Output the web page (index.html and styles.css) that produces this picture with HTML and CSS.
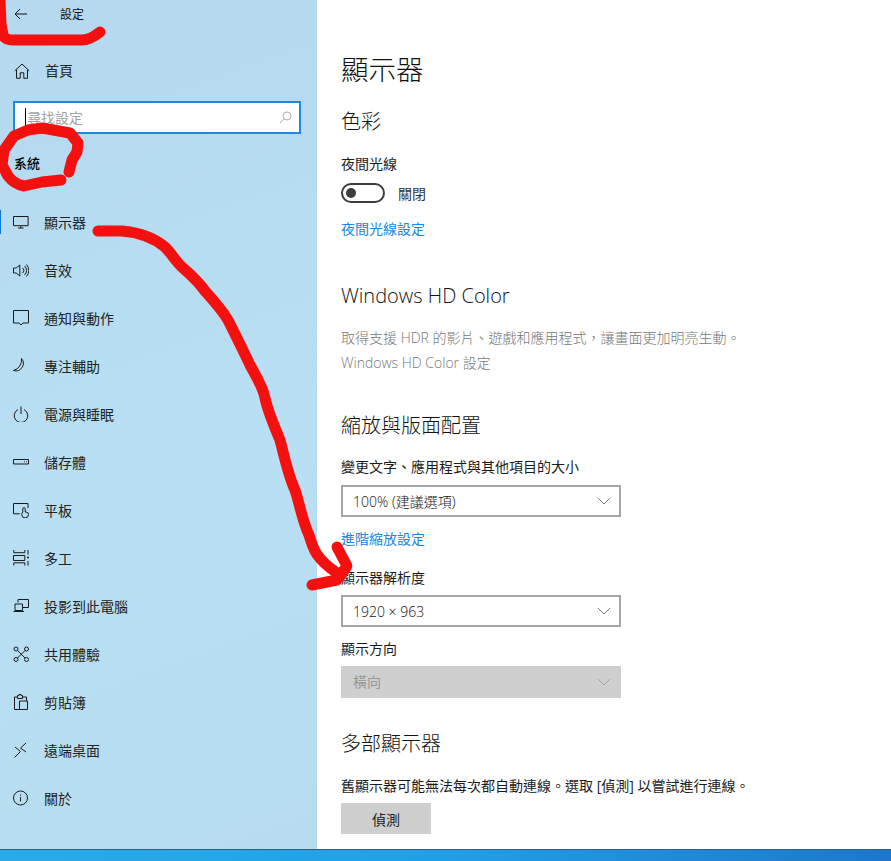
FILE: index.html
```html
<!DOCTYPE html>
<html lang="zh-Hant">
<head>
<meta charset="utf-8">
<title>設定</title>
<link rel="stylesheet" href="styles.css">
</head>
<body>
<div class="screen">
  <div class="window">
    <aside class="sidebar">
      <div class="topbar">
        <svg class="back-icon" viewBox="0 0 14 12"><path d="M13 6H1.200M6 1 1 6l5 5"/></svg>
        <span class="app-title">設定</span>
      </div>
      <div class="home-row">
        <svg class="icon icon-home" viewBox="0 0 16 16"><path d="M.8 7.800 8 1l7.200 6.800M2.500 6.500v8.800h3.700v-5.500h3.600v5.500h3.700V6.500"/></svg>
        <span class="nav-text home-text">首頁</span>
      </div>
      <div class="search">
        <span class="caret"></span>
        <span class="search-text">尋找設定</span>
        <svg class="search-icon" viewBox="0 0 14 14"><circle cx="8.700" cy="5.300" r="4.300"/><path d="M5.600 8.400 1 13"/></svg>
      </div>
      <div class="group-title">系統</div>
      <nav class="nav">
        <div class="nav-row active">
          <svg class="icon" viewBox="0 0 16 16"><path d="M.5 2.500h14.600v9.200H.5zM5 14h5.600M7.800 11.700V14"/></svg>
          <span class="nav-text">顯示器</span>
        </div>
        <div class="nav-row">
          <svg class="icon" viewBox="0 0 16 16"><path d="M.5 6h2.700l3.600-3v11l-3.600-3H.5zM9.500 6a3 3 0 0 1 0 5M11.500 4a6 6 0 0 1 0 9M13.500 2.500a9 9 0 0 1 0 12"/></svg>
          <span class="nav-text">音效</span>
        </div>
        <div class="nav-row">
          <svg class="icon" viewBox="0 0 16 16"><path d="M.5.5h15V13H10l-2 2-2-2H.5z"/></svg>
          <span class="nav-text">通知與動作</span>
        </div>
        <div class="nav-row">
          <svg class="icon" viewBox="0 0 16 16"><path d="M8.500.5A7.500 7.500 0 0 1 .5 12.500 11 11 0 0 0 8.500.5z"/></svg>
          <span class="nav-text">專注輔助</span>
        </div>
        <div class="nav-row">
          <svg class="icon" viewBox="0 0 16 16"><path d="M5 3.600a6.800 6.800 0 1 0 6 0M8 .5V8"/></svg>
          <span class="nav-text">電源與睡眠</span>
        </div>
        <div class="nav-row">
          <svg class="icon" viewBox="0 0 16 16"><path d="M.5 5.500h15V10H.5zM11 7.800h.8M13 7.800h.8"/></svg>
          <span class="nav-text">儲存體</span>
        </div>
        <div class="nav-row">
          <svg class="icon" viewBox="0 0 16 16"><path d="M15 6V1.500H.5v10.300H6.800M9.800 10V6.800a1.200 1.200 0 0 1 2.400 0V10h.8a2.500 2.500 0 0 1 2.500 2.500 3.400 3.400 0 0 1-6.800 0c0-1 .3-1.700 1.100-2.500z"/></svg>
          <span class="nav-text">平板</span>
        </div>
        <div class="nav-row">
          <svg class="icon" viewBox="0 0 16 16"><path d="M.8 0v2.700h11V0M.5 5.500h11.300v5H.5zM.8 15.500v-2.700h11v2.700M15 0v4.500M15 11v4.500"/><circle class="dot" cx="15" cy="7.500" r="1"/></svg>
          <span class="nav-text">多工</span>
        </div>
        <div class="nav-row">
          <svg class="icon" viewBox="0 0 16 16"><path d="M5 4.500v-3h10.500v8H9.800M2 6h7.500v6.500H2zM.5 13.500h10.500"/></svg>
          <span class="nav-text">投影到此電腦</span>
        </div>
        <div class="nav-row">
          <svg class="icon" viewBox="0 0 16 16"><circle cx="3" cy="3" r="2"/><circle cx="13.500" cy="3" r="2"/><circle cx="3" cy="13.500" r="2"/><circle cx="13.500" cy="13.500" r="2"/><path d="m4.500 4.500 7.500 7.500M12 4.500l-7.500 7.500"/></svg>
          <span class="nav-text">共用體驗</span>
        </div>
        <div class="nav-row">
          <svg class="icon" viewBox="0 0 16 16"><path d="M6.500 15.500H1.500V3H4.500M9.500 3H13.500V7M4.500 4.500V1.500H6V.5H8V1.500H9.500V4.500zM6.500 7H14.500V15.500H6.500z"/></svg>
          <span class="nav-text">剪貼簿</span>
        </div>
        <div class="nav-row">
          <svg class="icon" viewBox="0 0 16 16"><path d="m2 5 5.500 4.500L1.500 15.500M13 1 7.500 6l5.500 4"/></svg>
          <span class="nav-text">遠端桌面</span>
        </div>
        <div class="nav-row">
          <svg class="icon" viewBox="0 0 16 16"><circle cx="7.500" cy="8" r="7"/><path d="M7.500 7v4.500M7.500 4.500v1.200"/></svg>
          <span class="nav-text">關於</span>
        </div>
      </nav>
    </aside>
    <main class="content">
      <h1 class="page-title">顯示器</h1>

      <h2 class="heading heading-first">色彩</h2>
      <div class="label label-after-heading">夜間光線</div>
      <div class="toggle-row">
        <span class="toggle"><span class="knob"></span></span>
        <span class="toggle-text">關閉</span>
      </div>
      <a class="link link-after-toggle">夜間光線設定</a>

      <h2 class="heading heading-hd">Windows HD Color</h2>
      <div class="label muted label-hd">取得支援 HDR 的影片、遊戲和應用程式，讓畫面更加明亮生動。</div>
      <div class="label muted label-hd-link">Windows HD Color 設定</div>

      <h2 class="heading heading-scale">縮放與版面配置</h2>
      <div class="label label-scale">變更文字、應用程式與其他項目的大小</div>
      <div class="select select-a">
        <span>100% (建議選項)</span>
        <svg class="chevron" viewBox="0 0 14 8"><path d="m1 1 6 6 6-6"/></svg>
      </div>
      <a class="link link-scale">進階縮放設定</a>
      <div class="label label-res">顯示器解析度</div>
      <div class="select select-b">
        <span>1920 × 963</span>
        <svg class="chevron" viewBox="0 0 14 8"><path d="m1 1 6 6 6-6"/></svg>
      </div>
      <div class="label label-orient">顯示方向</div>
      <div class="select select-b disabled">
        <span class="disabled-text">橫向</span>
        <svg class="chevron" viewBox="0 0 14 8"><path d="m1 1 6 6 6-6"/></svg>
      </div>

      <h2 class="heading heading-multi">多部顯示器</h2>
      <div class="label label-multi">舊顯示器可能無法每次都自動連線。選取 [偵測] 以嘗試進行連線。</div>
      <div class="button">偵測</div>
    </main>
  </div>
  <div class="taskbar"></div>
  <svg class="scribble" viewBox="0 0 891 861">
    <path d="M0 0 1 24 3 35Q5 40 14 40H82Q90 40 100 32"/>
    <path d="M61 180 42 182 24 186Q14 184 8 176L2 165 4 150 14 136 28 130 42 128 70 133 78 143 77 152 72 160 69 172"/>
    <path d="M98 231H122Q148 233 165 247C172 254 176 262 183 268 190 274 198 281 205 291 215 302 222 310 228 320 236 336 244 352 250 365 256 376 263 387 265 398 268 412 275 428 280 440 284 455 288 475 295 490 300 505 302 520 309 535 313 548 315 558 337 573"/>
    <path d="M337 547 347 566 337 580 312 585"/>
  </svg>
</div>
</body>
</html>
```

FILE: styles.css
```css
html, body {
  margin: 0;
  padding: 0;
  height: 100%;
  overflow: hidden;
  background: #fff;
}

.screen {
  position: relative;
  width: 891px;
  height: 861px;
  display: flex;
  flex-direction: column;
  font-family: "Open Sans", "Noto Sans CJK TC", sans-serif;
  font-size: 14px;
  color: #111;
}

.window {
  display: flex;
  height: 849px;
}

.sidebar {
  width: 317px;
  flex: none;
  background: linear-gradient(160deg, #b5d9ef 0%, #b8dff3 55%, #b7dcf0 100%);
  display: flex;
  flex-direction: column;
}

.topbar {
  height: 28px;
  display: flex;
  align-items: center;
}

.back-icon {
  width: 14px;
  height: 12px;
  margin-left: 14px;
  fill: none;
  stroke: #111;
  stroke-width: 1;
}

.app-title {
  margin-left: 32px;
  padding-top: 2px;
  font-size: 12px;
  line-height: 28px;
}

.home-row {
  height: 48px;
  margin-top: 19px;
  display: flex;
  align-items: center;
}

.icon {
  width: 16px;
  height: 16px;
  margin-left: 13px;
  flex: none;
  fill: none;
  stroke: #1a1a1a;
  stroke-width: 1;
}

.icon-home {
  margin-left: 14px;
}

.icon .dot {
  fill: #1a1a1a;
  stroke: none;
}

.nav-text {
  margin-left: 15px;
  padding-top: 2px;
  font-size: 14px;
  line-height: 20px;
  color: #222;
}

.home-text {
  padding-top: 0;
}

.search {
  position: relative;
  box-sizing: border-box;
  width: 288px;
  height: 33px;
  margin: 6px 0 0 13px;
  border: 2px solid #1e88e0;
  background: #fff;
  display: flex;
  align-items: center;
}

.caret {
  width: 1px;
  height: 20px;
  margin-left: 10px;
  background: #000;
}

.search-text {
  margin-left: 1px;
  padding-bottom: 2px;
  color: #a3a3a3;
  font-size: 14px;
}

.search-icon {
  width: 13px;
  height: 13px;
  margin-left: auto;
  margin-right: 7px;
  fill: none;
  stroke: #a8a8a8;
  stroke-width: 1;
}

.group-title {
  margin: 19px 0 0 14px;
  font-size: 13px;
  font-weight: 500;
  line-height: 20px;
  color: #000;
}

.nav {
  margin-top: 25px;
  display: flex;
  flex-direction: column;
}

.nav-row {
  position: relative;
  height: 48px;
  display: flex;
  align-items: center;
}

.active::before {
  content: "";
  position: absolute;
  left: 0;
  top: 12px;
  width: 1px;
  height: 24px;
  background: #0d78d4;
}

.content {
  flex: 1;
  padding: 50px 0 0 24px;
  background: #fff;
  display: flex;
  flex-direction: column;
  align-items: flex-start;
}

.page-title {
  margin: 0;
  font-size: 27.500px;
  font-weight: 300;
  line-height: 40px;
  color: #111;
}

.heading {
  margin: 0;
  font-size: 20px;
  font-weight: 300;
  line-height: 28px;
  color: #111;
}

.heading-first { margin-top: 18px; }
.heading-hd { margin-top: 43px; }
.heading-scale { margin-top: 39px; }
.heading-multi { margin-top: 32px; }

.label {
  font-size: 14px;
  line-height: 20px;
  color: #1a1a1a;
  white-space: nowrap;
}

.muted {
  color: #767676;
  font-weight: 300;
}

.label-after-heading { margin-top: 18px; }
.label-hd { margin-top: 18px; }
.label-hd-link { margin-top: 5px; }
.label-scale { margin-top: 17px; }
.label-res { margin-top: 19px; }
.label-orient { margin-top: 12px; }
.label-multi { margin-top: 18px; }

.toggle-row {
  margin-top: 9px;
  height: 20px;
  display: flex;
  align-items: center;
}

.toggle {
  box-sizing: border-box;
  width: 44px;
  height: 20px;
  border: 2px solid #3c3c3c;
  border-radius: 10px;
  display: flex;
  align-items: center;
  padding-left: 3px;
}

.knob {
  width: 10px;
  height: 10px;
  border-radius: 50%;
  background: #3c3c3c;
}

.toggle-text {
  margin-left: 13px;
  font-size: 14px;
  color: #333;
}

.link {
  font-size: 14px;
  line-height: 20px;
  color: #1a86e0;
}

.link-after-toggle { margin-top: 16px; }
.link-scale { margin-top: 12px; }

.select {
  box-sizing: border-box;
  width: 280px;
  height: 32px;
  border: 2px solid #a6a6a6;
  background: #fff;
  padding: 0 8px 0 10px;
  display: flex;
  align-items: center;
  justify-content: space-between;
  font-size: 14px;
  font-weight: 300;
  color: #111;
}

.select-a { margin-top: 8px; }
.select-b { margin-top: 7px; }

.chevron {
  width: 14px;
  height: 8px;
  fill: none;
  stroke: #777;
  stroke-width: 1;
}

.disabled {
  background: #cfcfcf;
  border-color: #cfcfcf;
  color: #979797;
}

.disabled-text {
  padding-bottom: 2px;
  font-weight: 400;
}

.disabled .chevron { stroke: #a5a5a5; }

.button {
  width: 90px;
  height: 31px;
  margin-top: 7px;
  background: #cfcfcf;
  display: flex;
  align-items: center;
  justify-content: center;
  font-size: 14px;
  color: #222;
}

.taskbar {
  flex: 1;
  border-top: 1px solid #2a5f86;
  background: linear-gradient(90deg, #27ace9 0%, #219fe6 50%, #1b78cc 100%);
}

.scribble {
  position: absolute;
  left: 0;
  top: 0;
  width: 891px;
  height: 861px;
  pointer-events: none;
  fill: none;
  stroke: #f51010;
  stroke-width: 11;
  stroke-linecap: round;
  stroke-linejoin: round;
}
```
